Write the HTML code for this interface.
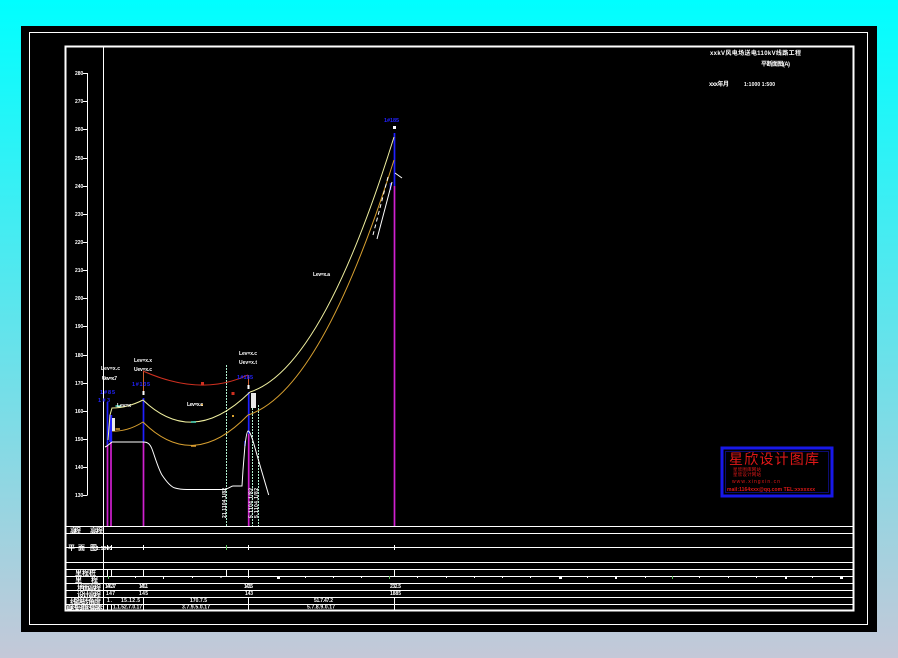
<!DOCTYPE html>
<html><head><meta charset="utf-8"><style>
html,body{margin:0;padding:0;width:898px;height:658px;overflow:hidden;background:linear-gradient(180deg,#00ffff 0%,#c4c8d8 100%)}
svg{position:absolute;left:0;top:0}
text{font-family:"Liberation Sans","Noto Sans CJK SC",sans-serif;fill:#fff;font-size:5px;font-weight:bold}
.c{font-size:7px}
.b{fill:#2222ff;font-size:5.5px}
.r{fill:#e01818;font-weight:normal}
</style></head><body>
<svg width="898" height="658" viewBox="0 0 898 658" xmlns="http://www.w3.org/2000/svg">
<rect x="21" y="26" width="856" height="606" fill="#000"/>
<rect x="29.5" y="32.5" width="838" height="592" fill="none" stroke="#fff" stroke-width="1"/>
<rect x="65.5" y="46.5" width="788" height="564" fill="none" stroke="#fff" stroke-width="2"/>
<path d="M103.5 46V611" stroke="#fff" fill="none"/>
<path d="M66 526.5H853M66 533.5H853M66 547.5H853M66 562.5H853M66 569.5H853M66 576.5H853M66 583.5H853M66 590.5H853M66 597.5H853M66 604.5H853" stroke="#fff" fill="none"/>
<!-- axis -->
<path d="M87.5 73V495.5M83 73.5H87M83 101.5H87M83 129.5H87M83 158.5H87M83 186.5H87M83 214.5H87M83 242.5H87M83 270.5H87M83 298.5H87M83 326.5H87M83 355.5H87M83 383.5H87M83 411.5H87M83 439.5H87M83 467.5H87M83 495.5H87" stroke="#fff" fill="none"/>
<g>
<text x="75" y="75">280</text><text x="75" y="103">270</text><text x="75" y="131">260</text><text x="75" y="160">250</text>
<text x="75" y="188">240</text><text x="75" y="216">230</text><text x="75" y="244">220</text><text x="75" y="272">210</text>
<text x="75" y="300">200</text><text x="75" y="328">190</text><text x="75" y="357">180</text><text x="75" y="385">170</text>
<text x="75" y="413">160</text><text x="75" y="441">150</text><text x="75" y="469">140</text><text x="75" y="497">130</text>
</g>
<!-- magenta verticals -->
<path d="M107.5 442V526M111 442V526M143.5 442V526M248.7 434V526M394.5 186V526" stroke="#d020d0" stroke-width="1.7" fill="none"/>
<!-- blue -->
<path d="M107.5 402V445M143.5 398V442M248.7 392V434M394.5 133V186" stroke="#2020ff" stroke-width="1.7" fill="none"/>
<path d="M110.7 415V442" stroke="#2020ff" stroke-width="3" fill="none"/>
<path d="M390.5 183V190M245 441V446" stroke="#2020ff" stroke-width="1.5" fill="none"/>
<path d="M143.5 371V392M248.5 375V385" stroke="#d06030" fill="none"/>
<!-- dashed -->
<path d="M226.5 365V526M252.5 405V526M258.5 405V526" stroke="#b0f0d0" stroke-dasharray="2 1" fill="none"/>
<!-- curves -->
<path d="M108 440L110 415L112 408Q127 408 143 400Q193 448 250 392" stroke="#f0f0a0" fill="none"/>
<path d="M250 392Q322 369 394 137" stroke="#f0f0a0" fill="none"/>
<path d="M112 431Q127 432 143 422Q193 472 248 415" stroke="#d8a030" fill="none"/>
<path d="M248 415Q321 391.5 394 160" stroke="#d8a030" fill="none"/>
<path d="M143 371Q201 397 248 375" stroke="#d03020" fill="none"/>
<path d="M105 447L107 446L112 442H143C148 442 150 444 152 449C155 457 158 468 162 475C166 481 171 487 175 488C180 489.5 183 489.5 187 489.5H223C228 489.5 231 486 233 486H242L243 470L245 445C246 437 247 431 248 431C250 431 252 437 255 448L259 462L268.7 495" stroke="#fff" fill="none"/>
<path d="M395 173L402 178M392 182L377 239" stroke="#fff" fill="none"/>
<path d="M388 177L373 235" stroke="#fff" stroke-dasharray="4 3" fill="none"/>
<!-- small symbols -->
<rect x="393" y="126" width="3" height="3" fill="#fff"/>
<path d="M115.5 406H121M191 422H196" stroke="#50e0c0" stroke-width="1.5" fill="none"/>
<path d="M115.5 429H120M191 446H196" stroke="#e0a030" stroke-width="1.5" fill="none"/>
<rect x="231.5" y="392" width="3" height="3" fill="#d03020"/><rect x="232" y="415" width="2" height="2" fill="#d8a030"/>
<rect x="201" y="382" width="3" height="3" fill="#d03020"/><rect x="201" y="404" width="2" height="2" fill="#d8a030"/>
<rect x="142.5" y="391" width="2" height="4" fill="#fff"/><rect x="247.5" y="385" width="2" height="4" fill="#fff"/>
<rect x="251" y="393" width="5" height="15" fill="#e8e8e8"/><rect x="112" y="418" width="3" height="13" fill="#e8e8e8"/>
<!-- labels -->
<text x="101" y="370" textLength="19">Lev=x.c</text><text x="102" y="380" textLength="15">Uev=x.7</text>
<text x="134" y="362" textLength="18">Lev=x.x</text><text x="134" y="371" textLength="18">Uev=x.c</text>
<text x="239" y="355" textLength="18">Lev=x.c</text><text x="239" y="364" textLength="18">Uev=x.t</text>
<text x="117" y="407" textLength="14">Lev=x</text><text x="187" y="406" textLength="16">Lev=x.c</text><text x="313" y="276" textLength="17">Lev=x.a</text>
<text class="b" x="100" y="394" textLength="15">1#85</text><text class="b" x="98" y="402" textLength="12">1#3</text>
<text class="b" x="132" y="386" textLength="18">1#135</text><text class="b" x="237" y="379" textLength="16">1#185</text><text class="b" x="384" y="122" textLength="15">1#185</text>
<g><text transform="translate(226,518) rotate(-90)" textLength="30">21.1104.1/82</text><text transform="translate(252.5,518) rotate(-90)" textLength="30">5.1104.1/82</text><text transform="translate(258,518) rotate(-90)" textLength="30">5.1104.1/82</text></g>
<!-- table left labels -->
<text class="c" x="70" y="533" textLength="11">高程</text><text class="c" x="90" y="533" textLength="13">高程</text>
<text class="c" x="68" y="550">平</text><text class="c" x="78" y="550">面</text><text class="c" x="90" y="550">图</text><text x="96" y="550" textLength="16">1:1000</text>
<text class="c" x="75" y="575" textLength="21">里程桩</text>
<text class="c" x="75" y="582">里</text><text class="c" x="91" y="582">程</text>
<text class="c" x="77" y="590" textLength="24">地面高程</text>
<text class="c" x="77" y="597" textLength="24">设计高程</text>
<text class="c" x="70" y="604" textLength="31">线路转角度</text>
<text class="c" x="66" y="610" textLength="37">直线段曲线要素</text>
<!-- ticks -->
<path d="M107.5 569V576M111.5 569V576M143.5 569V576M226.5 569V576M248.5 569V576M394.5 569V576M107.5 604V611M111.5 604V611M143.5 597V611M248.5 597V611M394.5 597V611M107.5 545V550M111.5 545V550M143.5 545V550M248.5 545V550M394.5 545V550" stroke="#fff" fill="none"/>
<path d="M226.5 545V550" stroke="#60c060" fill="none"/>
<path d="M135.5 576v2M163.5 576v3M192.5 576v2M220 577h2M248.5 576v2M305.5 576v2M333.5 576v2M361.5 576v2M417.5 576v2M446.5 576v2M474.5 576v2M502.5 576v2M530.5 576v2M587.5 576v2M645.5 576v2M699.5 576v2M728.5 576v2M756.5 576v2M812.5 576v2" stroke="#fff" fill="none"/>
<path d="M277 577h3v2h-3zM559 577h3v2h-3zM615 577h2v2h-2zM785 577h2v2h-2zM840 577h3v2h-3z" fill="#fff"/>
<path d="M108.5 576v3M389.5 576v3M672.5 576v3" stroke="#60c060" fill="none"/>
<!-- table values -->
<text x="105" y="588" textLength="11">146.37</text><text x="139" y="588" textLength="9">145.1</text><text x="244" y="588" textLength="9">143.5</text><text x="390" y="588" textLength="11">232.5</text>
<text x="106" y="595" textLength="9">147</text><text x="139" y="595" textLength="9">145</text><text x="245" y="595" textLength="8">143</text><text x="390" y="595" textLength="11">1885</text>
<text x="107" y="602" textLength="5">1.</text><text x="121" y="602" textLength="19">15.12.5</text><text x="190" y="602" textLength="17">170.7.5</text><text x="314" y="602" textLength="19">51.7.47.2</text>
<text x="113" y="608.5" textLength="29">1.1.52.7.0.17</text><text x="182" y="608.5" textLength="28">3.7.9.5.0.17</text><text x="307" y="608.5" textLength="28">5.7.8.9.0.17</text>
<!-- title -->
<text x="710" y="55" style="font-size:6px" textLength="91">xxkV风电场送电110kV线路工程</text>
<text x="761" y="66" style="font-size:6px" textLength="29">平断面图(A)</text>
<text x="709" y="86" style="font-size:6px" textLength="20">xxx年月</text><text x="744" y="86" textLength="31">1:1000 1:500</text>
<!-- logo -->
<rect x="722" y="448" width="110" height="48" fill="#000" stroke="#1818e8" stroke-width="3"/>
<rect x="725.5" y="451.5" width="103" height="41" fill="none" stroke="#0c0c70"/>
<text class="r" x="729" y="464" style="font-size:14px" textLength="90">星欣设计图库</text>
<text class="r" x="733" y="471" style="font-size:4.5px" textLength="28">星欣图库网站</text>
<text class="r" x="733" y="476" style="font-size:4.5px" textLength="28">星欣设计网站</text>
<text class="r" x="732" y="483" style="font-size:5px" textLength="48">www.xingxin.cn</text>
<text class="r" x="727" y="491" style="font-size:5px;font-weight:bold" textLength="88">mail:1164xxx@qq.com TEL:xxxxxxx</text>
</svg>
</body></html>
